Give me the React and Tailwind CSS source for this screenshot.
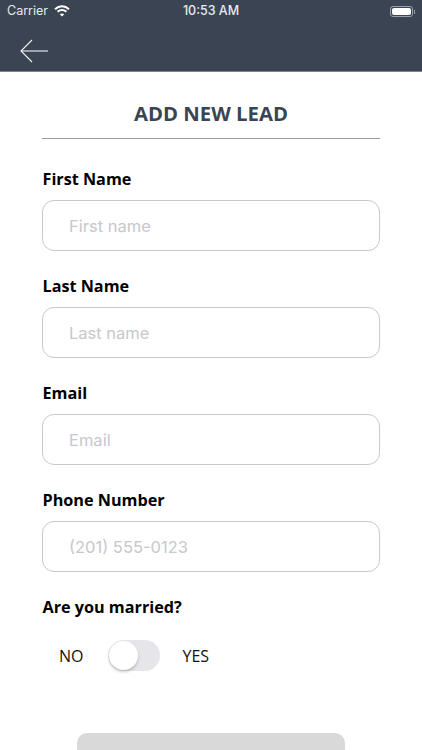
const fields = [
  { label: 'First Name', placeholder: 'First name' },
  { label: 'Last Name', placeholder: 'Last name' },
  { label: 'Email', placeholder: 'Email' },
  { label: 'Phone Number', placeholder: '(201) 555-0123' },
]

export default function App() {
  return (
    <div className="h-[750px] w-[422px] overflow-hidden bg-white font-['Open_Sans',sans-serif]">
      {/* Status bar + nav */}
      <div className="h-[72px] border-b border-[#7c8590] bg-[#3a4452]">
        <div className="flex h-[22px] items-center justify-between px-[7px] pt-[1px] font-['Inter',sans-serif] text-[12.5px] text-[#e8eaec]">
          <div className="flex w-[120px] items-center gap-[6px]">
            <span>Carrier</span>
            <svg width="16" height="12" viewBox="0 0 16 12" fill="none" stroke="#fff" strokeWidth="2" className="-mt-[2px]">
              <path d="M1 4.2C5 .4 11 .4 15 4.2" />
              <path d="M3.6 6.8c2.5-2.3 6.3-2.3 8.8 0" />
              <path d="M8 11.6 5.8 9.2c1.3-1 3.1-1 4.4 0Z" fill="#fff" stroke="none" />
            </svg>
          </div>
          <span className="font-medium">10:53 AM</span>
          <div className="flex w-[120px] items-center justify-end">
            <div className="flex h-[11px] w-[23px] items-center rounded-[3px] border border-[#9aa1aa] p-[1px]">
              <div className="h-full w-full rounded-[2px] bg-white" />
            </div>
            <div className="ml-[1px] h-[4px] w-[1px] bg-[#9aa1aa]" />
          </div>
        </div>
        <div className="pl-[19px] pt-[17px]">
          <svg width="30" height="24" viewBox="0 0 30 24" fill="none" stroke="#f2f3f4" strokeWidth="1.1" className="block">
            <path d="M29 12H2" />
            <path d="M13 1 2 12l11 11" />
          </svg>
        </div>
      </div>

      {/* Form */}
      <div className="px-[42px]">
        <h1 className="border-b border-[#9a9a9a] pb-[10px] pt-[27px] text-center text-[20.3px] leading-[29px] font-bold text-[#3a4452]">
          ADD NEW LEAD
        </h1>

        <div className="mt-[28px] flex flex-col gap-[23px]">
          {fields.map((field) => (
            <div key={field.label}>
              <label className="block pl-[0.5px] text-[16.2px] leading-[24px] font-bold text-black">{field.label}</label>
              <div className="mt-[9px] flex h-[51px] items-center rounded-[12px] border border-[#c9c9c9] pl-[26px] pt-[1px] font-['Inter',sans-serif] text-[16.5px] text-[#c7c7cd]">
                {field.placeholder}
              </div>
            </div>
          ))}
        </div>

        <p className="mt-[23px] pl-[0.5px] text-[16.2px] leading-[24px] font-bold text-black">Are you married?</p>

        <div className="mt-[21px] flex items-center pl-[17px] text-[16px] text-[#111]">
          <span>NO</span>
          <div className="ml-[24px] flex h-[31px] w-[52px] items-center rounded-full bg-[#e5e5ea] pl-[1px]">
            <div className="h-[29px] w-[29px] rounded-full bg-white shadow-[0_2px_3px_rgba(0,0,0,0.2)]" />
          </div>
          <span className="ml-[23px]">YES</span>
        </div>

        <div className="mx-[35px] mt-[62px] h-[60px] rounded-[10px] bg-[#d9d9d9]" />
      </div>
    </div>
  )
}
